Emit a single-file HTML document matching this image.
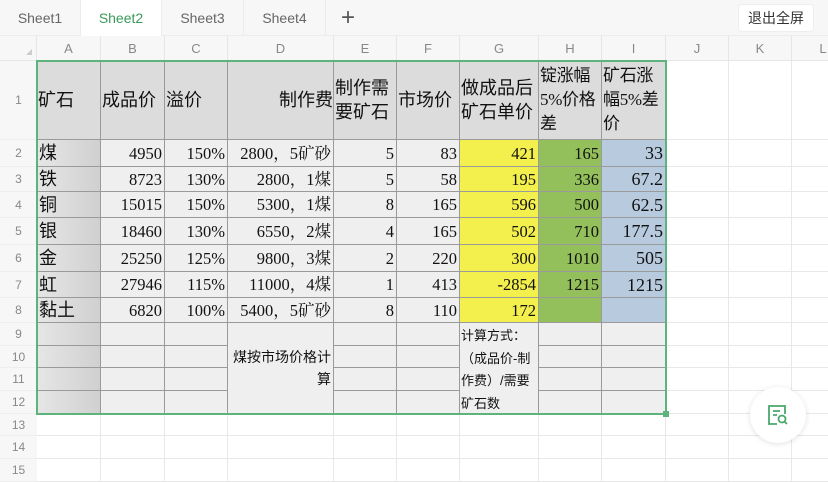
<!DOCTYPE html>
<html><head><meta charset="utf-8">
<style>
*{margin:0;padding:0;box-sizing:border-box}
body{width:828px;height:466px;overflow:hidden;background:#fff;font-family:"Liberation Sans","Noto Sans CJK SC",sans-serif;position:relative}
.tabs{position:absolute;left:0;top:0;width:828px;height:36px;background:#f7f7f7;border-bottom:1px solid #ececec}
.tab{position:absolute;top:0;height:36px;line-height:36px;text-align:center;font-size:14px;color:#666;border-right:1px solid #ececec}
.tab.on{background:#fff;color:#3a9a5c}
.plus{position:absolute;left:341px;top:6px;font-size:24px;color:#555;line-height:24px;font-weight:300}
.btn{position:absolute;left:738px;top:4px;width:76px;height:28px;background:#fff;border:1px solid #eee;border-radius:4px;font-size:14px;color:#333;text-align:center;line-height:26px}
.c{position:absolute;overflow:hidden;white-space:nowrap}
.hd{background:#f7f7f7;color:#888;font-size:13px;text-align:center;border-right:1px solid #e6e6e6;border-bottom:1px solid #e6e6e6}
.rh{background:#f7f7f7;color:#888;font-size:12px;text-align:center;border-bottom:1px solid #eee}
.g{border-right:1px solid #e8e8e8;border-bottom:1px solid #e8e8e8}
.t{border-right:1px solid #9a9a9a;border-bottom:1px solid #9a9a9a;background:#efefef;font-family:"Liberation Serif","Noto Serif CJK SC",serif;font-size:16.5px;color:#111;text-align:right;padding-right:2px}
.cn{font-family:"Liberation Sans","Noto Sans CJK SC",sans-serif;font-size:18px;text-align:left;padding-left:2px}
.h1{background:#dcdcdc;font-family:"Liberation Serif","Noto Sans CJK SC",sans-serif;font-size:18px;line-height:24px;white-space:normal;display:flex;align-items:center;text-align:left}
.A{background:linear-gradient(90deg,#e6e6e6,#d0d0d0)}
.y{background:#f3ef4c}.gr{background:#93c05a}.bl{background:#b8cade}
.sm{font-family:"Liberation Sans","Noto Sans CJK SC",sans-serif;font-size:13px;white-space:normal;line-height:22.5px;text-align:left}
</style></head><body>
<div class="tabs">
<div class="tab" style="left:0;width:81px">Sheet1</div>
<div class="tab on" style="left:81px;width:81px">Sheet2</div>
<div class="tab" style="left:162px;width:82px">Sheet3</div>
<div class="tab" style="left:244px;width:82px">Sheet4</div>
<div class="plus">+</div>
<div class="btn">退出全屏</div>
</div>
<div id="g"></div>
<script>
var cols=[37,101,165,228,334,397,460,539,602,666,729,792,855];
var rows=[36,61,140,167,192,218,245,272,298,323,346,368,391,414,436,459,482];
var L="ABCDEFGHIJKL";var h="";
function c(x0,x1,y0,y1,cls,txt,st){h+='<div class="c '+cls+'" style="left:'+x0+'px;top:'+y0+'px;width:'+(x1-x0)+'px;height:'+(y1-y0)+'px;line-height:'+(y1-y0)+'px;'+(st||'')+'">'+(txt||'')+'</div>';}
c(0,37,36,61,'hd','<span style="position:absolute;left:26px;top:13px;width:0;height:0;border-left:6px solid transparent;border-bottom:6px solid #ccc"></span>');
for(var i=0;i<12;i++)c(cols[i],cols[i+1],36,61,'hd',L[i]);
for(var r=1;r<=15;r++)c(0,37,rows[r],rows[r+1],'rh',r);
for(var r=1;r<=15;r++)for(var i=0;i<12;i++)c(cols[i],cols[i+1],rows[r],rows[r+1],'g','');
var hdr=['矿石','成品价','溢价','<span style="width:100%;text-align:right">制作费</span>','制作需要矿石','市场价','做成品后矿石单价','<span>锭涨幅<br>5%价格<br>差</span>','<span>矿石涨<br>幅5%差<br>价</span>'];
for(var i=0;i<9;i++)c(cols[i],cols[i+1],rows[1],rows[2],'t h1',hdr[i],'line-height:24px;padding-left:1px;padding-right:0;'+(i>=7?'font-size:17px;letter-spacing:-0.3px;':''));
var d=[['煤',4950,'150%','2800，5矿砂',5,83,421,165,33],['铁',8723,'130%','2800，1煤',5,58,195,336,'67.2'],['铜',15015,'150%','5300，1煤',8,165,596,500,'62.5'],['银',18460,'130%','6550，2煤',4,165,502,710,'177.5'],['金',25250,'125%','9800，3煤',2,220,300,1010,505],['虹',27946,'115%','11000，4煤',1,413,-2854,1215,1215],['黏土',6820,'100%','5400，5矿砂',8,110,172,'','']];
var cl=['cn A','','','','','','y','gr','bl'];
for(var r=0;r<7;r++)for(var i=0;i<9;i++)c(cols[i],cols[i+1],rows[r+2],rows[r+3],'t '+cl[i],d[r][i],i==8?'font-size:18px;':'');
for(var r=9;r<=12;r++)for(var i=0;i<9;i++){if(i==3||i==6)continue;c(cols[i],cols[i+1],rows[r],rows[r+1],'t '+(i==0?'A':''),'');}
c(cols[3],cols[4],rows[9],rows[13],'t sm','<div style="padding-top:23px;text-align:right;font-size:14px">煤按市场价格计<br>算</div>','line-height:22px;');
c(cols[6],cols[7],rows[9],rows[13],'t sm','<div style="padding-top:2px;padding-left:1px;">计算方式：<br>（成品价-制<br>作费）/需要<br>矿石数</div>','line-height:22.5px;');
document.getElementById('g').innerHTML=h;
</script>
<div style="position:absolute;left:36px;top:60px;width:631px;height:355px;border:2px solid #5cb37c"></div>
<div style="position:absolute;left:663px;top:411px;width:6px;height:6px;background:#5cb37c"></div>
<div style="position:absolute;left:750px;top:387px;width:56px;height:56px;border-radius:50%;background:#fff;box-shadow:0 1px 6px rgba(0,0,0,.12)">
<svg width="24" height="24" viewBox="0 0 24 24" style="position:absolute;left:16px;top:16px" fill="none" stroke="#4aa86c" stroke-width="1.8">
<path d="M11 21H3V3h16v8"/><path d="M7 8h7M7 12h4"/><circle cx="16" cy="16" r="3.5"/><path d="M18.5 18.5L21 21"/></svg>
</div>
</body></html>
